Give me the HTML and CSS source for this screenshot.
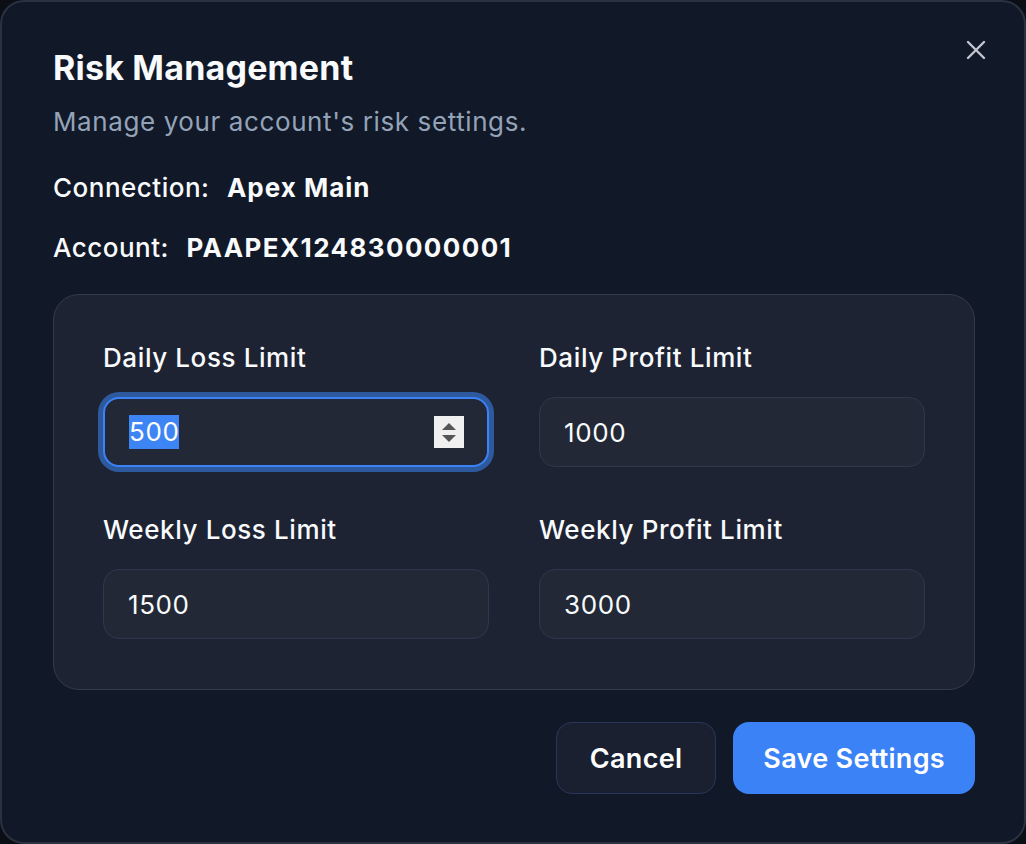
FILE: index.html
```html
<!DOCTYPE html>
<html lang="en">
<head>
    <meta charset="UTF-8">
    <meta name="viewport" content="width=device-width, initial-scale=1.0">
    <title>Risk Management</title>
    <link rel="stylesheet" href="styles.css">
</head>
<body>

    <div class="dialog">
        <button class="close-btn" aria-label="Close">
            <svg width="20" height="20" viewBox="0 0 20 20">
                <path d="M2 2 L18 18 M18 2 L2 18" stroke="currentColor" stroke-width="2.4" stroke-linecap="round" fill="none"/>
            </svg>
        </button>

        <h1 class="title">Risk Management</h1>
        <p class="subtitle">Manage your account's risk settings.</p>

        <div class="info-row">Connection: <strong>Apex Main</strong></div>
        <div class="info-row">Account: <strong class="account-id">PAAPEX124830000001</strong></div>

        <div class="limits">
            <div class="field">
                <label for="daily-loss">Daily Loss Limit</label>
                <div class="field-input focused" id="daily-loss">
                    <span class="selected">500</span>
                    <span class="spinner">
                        <span class="arrow-up"></span>
                        <span class="arrow-down"></span>
                    </span>
                </div>
            </div>
            <div class="field">
                <label for="daily-profit">Daily Profit Limit</label>
                <input class="field-input" type="text" id="daily-profit" value="1000">
            </div>
            <div class="field">
                <label for="weekly-loss">Weekly Loss Limit</label>
                <input class="field-input" type="text" id="weekly-loss" value="1500">
            </div>
            <div class="field">
                <label for="weekly-profit">Weekly Profit Limit</label>
                <input class="field-input" type="text" id="weekly-profit" value="3000">
            </div>
        </div>

        <div class="actions">
            <button class="cancel-btn">Cancel</button>
            <button class="save-btn">Save Settings</button>
        </div>
    </div>

</body>
</html>
```

FILE: styles.css
```css
html, body {
    margin: 0;
    padding: 0;
    height: 100%;
    background-color: #0b0e15;
}

body {
    font-family: Inter, "Noto Sans", sans-serif;
    color: #f8fafc;
}

.dialog {
    position: relative;
    box-sizing: border-box;
    height: 100%;
    background-color: #111827;
    border: 2px solid #2a3140;
    border-radius: 24px;
    padding: 44px 49px 0 51px;
}

.close-btn {
    position: absolute;
    top: 38px;
    right: 38px;
    width: 20px;
    height: 20px;
    padding: 0;
    background: none;
    border: none;
    color: #c2c6ce;
    cursor: pointer;
}

.title {
    margin: 0;
    font-size: 34px;
    line-height: 44px;
    font-weight: 700;
    letter-spacing: 0.2px;
}

.subtitle {
    margin: 16px 0 0;
    font-size: 26px;
    line-height: 32px;
    letter-spacing: 0.6px;
    color: #94a3b8;
}

.info-row {
    margin-top: 34px;
    font-size: 26px;
    line-height: 32px;
    font-weight: 500;
    letter-spacing: 0.5px;
}

.info-row + .info-row {
    margin-top: 28px;
}

.info-row strong {
    font-weight: 700;
    margin-left: 10px;
    letter-spacing: 1px;
}

.info-row .account-id {
    letter-spacing: 1.4px;
}

.limits {
    margin-top: 30px;
    background-color: #1e2333;
    border: 1px solid #333a4a;
    border-radius: 26px;
    padding: 49px 49px 50px 49px;
    display: grid;
    grid-template-columns: 1fr 1fr;
    column-gap: 50px;
    row-gap: 49px;
}

.field label {
    display: block;
    font-size: 26px;
    line-height: 28px;
    font-weight: 500;
    letter-spacing: 0.6px;
    margin-bottom: 25px;
}

.field-input {
    box-sizing: border-box;
    display: flex;
    align-items: center;
    width: 100%;
    height: 70px;
    padding: 0 24px;
    background-color: #222836;
    border: 1px solid #30374a;
    border-radius: 16px;
    color: #f8fafc;
    font-family: Inter, "Noto Sans", sans-serif;
    font-size: 26px;
    letter-spacing: 0.6px;
    outline: none;
}

.field-input.focused {
    border: 2px solid #3b82f6;
    box-shadow: 0 0 0 5px #2d5a9e;
    justify-content: space-between;
}

.selected {
    background-color: #3d85f5;
    color: #fff;
    line-height: 34px;
}

.spinner {
    display: flex;
    flex-direction: column;
    align-items: center;
    justify-content: center;
    gap: 5px;
    width: 30px;
    height: 32px;
    background-color: #f0f0f0;
    margin-right: -1px;
}

.arrow-up, .arrow-down {
    width: 0;
    height: 0;
    border-left: 7px solid transparent;
    border-right: 7px solid transparent;
}

.arrow-up {
    border-bottom: 7px solid #555;
}

.arrow-down {
    border-top: 7px solid #555;
}

.actions {
    display: flex;
    justify-content: flex-end;
    gap: 17px;
    margin-top: 32px;
}

.actions button {
    height: 72px;
    padding: 0 33px;
    border-radius: 16px;
    font-family: Inter, "Noto Sans", sans-serif;
    font-size: 27px;
    font-weight: 600;
    letter-spacing: 0.3px;
    color: #fff;
    cursor: pointer;
}

.cancel-btn {
    background-color: #1a2030;
    border: 1px solid #27365a;
}

.save-btn {
    background-color: #3b82f6;
    border: none;
    padding: 0 30px;
}

.actions .save-btn {
    padding: 0 30px;
}

.save-btn:hover {
    background-color: #2f74e8;
}
```
